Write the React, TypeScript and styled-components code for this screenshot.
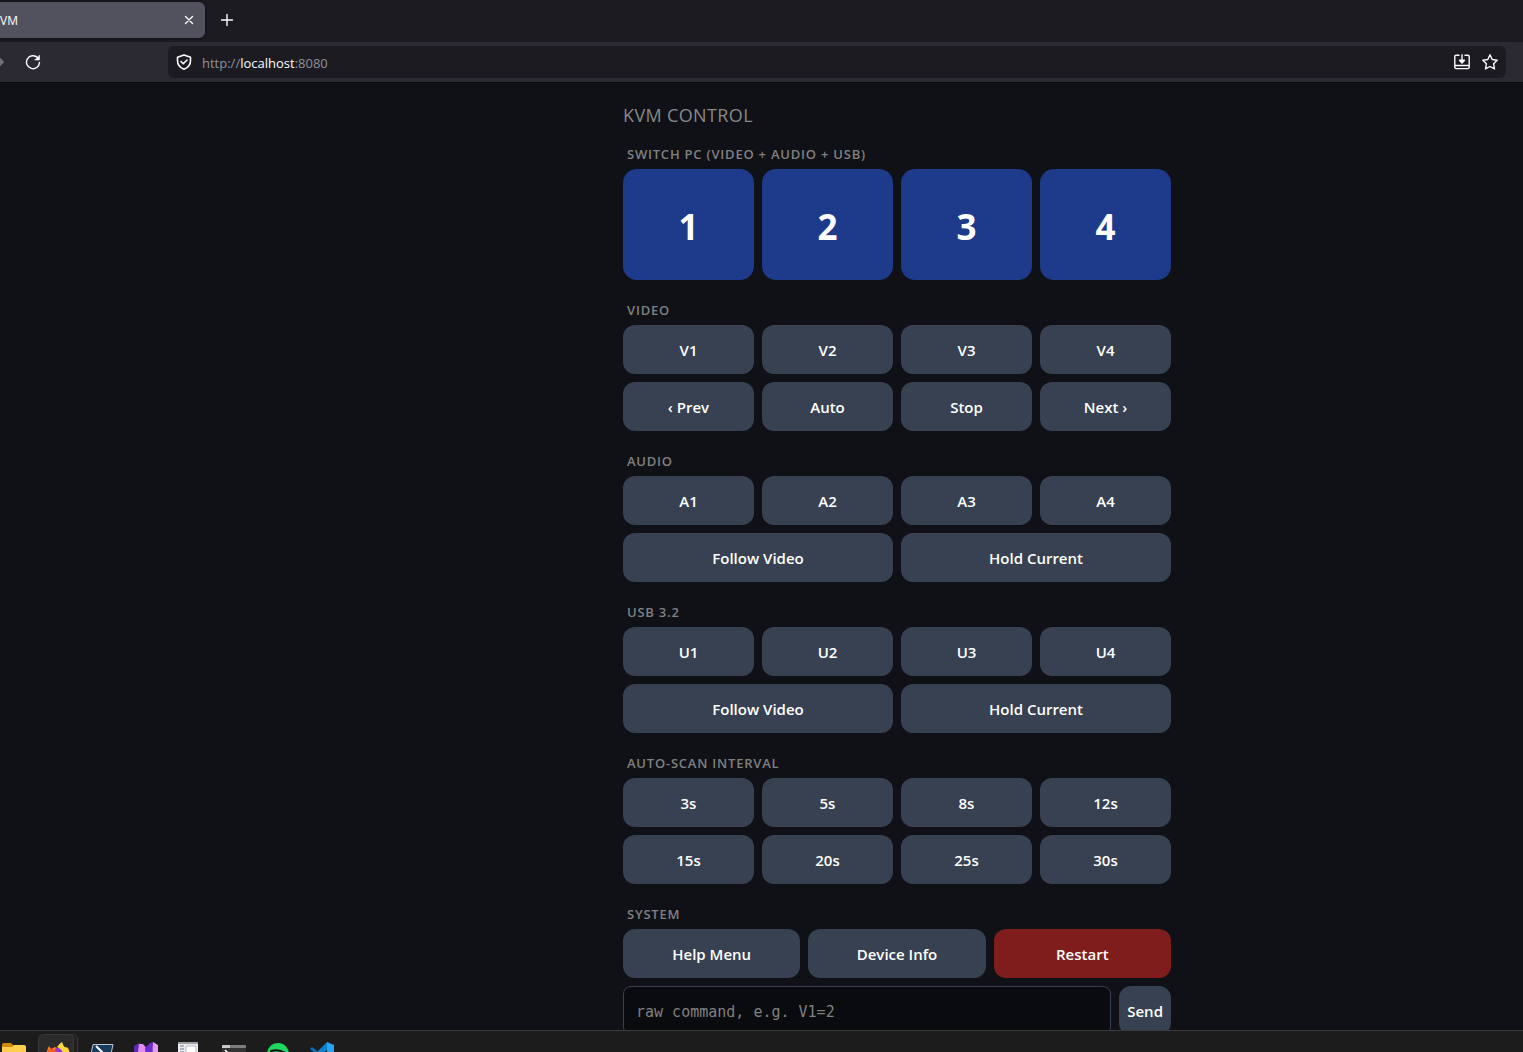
import React from "react";
import styled, { createGlobalStyle } from "styled-components";

const ui = '"Open Sans", "Noto Sans", sans-serif';

const GlobalStyle = createGlobalStyle`
  * { box-sizing: border-box; }
  body { margin: 0; background: #0f1116; font-family: ${ui}; color: #fff; overflow: hidden; }
  button, input { font: inherit; color: inherit; }
`;

const Desktop = styled.div`
  height: 100vh;
  display: flex;
  flex-direction: column;
  overflow: hidden;
`;

const TabStrip = styled.div`
  height: 42px;
  flex: none;
  display: flex;
  align-items: center;
  gap: 8px;
  padding-bottom: 2px;
  background: #1c1b22;
`;

const Tab = styled.div`
  width: 205px;
  height: 36px;
  display: flex;
  align-items: center;
  justify-content: space-between;
  padding-right: 4px;
  border-radius: 0 6px 6px 0;
  background: #52525e;
  box-shadow: 0 0 3px #0c0c10;
  font-size: 12px;
`;

const IconButton = styled.button<{ $size?: number }>`
  width: ${(p) => p.$size ?? 28}px;
  height: ${(p) => p.$size ?? 28}px;
  flex: none;
  display: grid;
  place-items: center;
  padding: 0;
  border: 0;
  background: none;
  color: #fbfbfe;
`;

const Toolbar = styled.div`
  height: 41px;
  flex: none;
  display: flex;
  align-items: center;
  padding-right: 17px;
  background: #2b2a33;
  border-bottom: 1px solid #0a0a0d;
`;

const NavButtons = styled.div`
  width: 176px;
  margin-left: -8px;
  flex: none;
  display: flex;
  align-items: center;
  gap: 15px;
`;

const AddressBar = styled.div`
  flex: 1;
  height: 32px;
  display: flex;
  align-items: center;
  padding: 0 2px;
  border-radius: 6px;
  background: #1c1b22;
`;

const Address = styled.div`
  flex: 1;
  padding: 2px 0 0 4px;
  font-size: 13px;
  line-height: 18px;
  color: #8f8f98;
  b { font-weight: 400; color: #fbfbfe; }
`;

const Viewport = styled.div`
  flex: 1;
  min-height: 0;
  overflow: hidden;
  padding: 20px 0 0 271px;
`;

const Panel = styled.main`
  max-width: 548px;
  margin: 0 auto;
`;

const Title = styled.h1`
  margin: 0 0 18px;
  font-size: 18px;
  line-height: 24px;
  font-weight: 400;
  letter-spacing: 0.02em;
  color: #888;
`;

const Section = styled.section`
  margin-bottom: 21px;
`;

const SectionTitle = styled.h2`
  margin: 0 0 6px;
  padding-left: 4px;
  font-size: 13px;
  line-height: 18px;
  font-weight: 600;
  letter-spacing: 0.06em;
  color: #808080;
`;

const Grid = styled.div<{ $cols: number }>`
  display: grid;
  grid-template-columns: repeat(${(p) => p.$cols}, 1fr);
  gap: 8px;
  & + & { margin-top: 8px; }
`;

const Key = styled.button<{ $tone?: "danger" }>`
  height: 49px;
  padding: 0 8px;
  border: 0;
  border-radius: 12px;
  background: ${(p) => (p.$tone === "danger" ? "#7f1d1d" : "#374151")};
  font-size: 15px;
  font-weight: 600;
  color: #fff;
`;

const BigKey = styled(Key)`
  height: 111px;
  padding-top: 4px;
  border-radius: 14px;
  background: #1e3a8a;
  font-size: 35px;
  font-weight: 700;
`;

const CommandRow = styled.form`
  display: flex;
  gap: 8px;
  margin-top: 8px;
`;

const CommandInput = styled.input`
  flex: 1;
  min-width: 0;
  height: 49px;
  padding: 2px 12px 0;
  border: 1px solid #374151;
  border-radius: 8px;
  background: #0a0b0f;
  font-family: "DejaVu Sans Mono", monospace;
  font-size: 15px;
  &::placeholder { color: #808080; opacity: 1; }
`;

const Taskbar = styled.nav`
  height: 22px;
  flex: none;
  display: flex;
  overflow: hidden;
  padding: 3px 0 0;
  border-top: 1px solid #3c3c3c;
  background: #1c1c1c;
`;

const TaskButton = styled.button<{ $active?: boolean }>`
  width: 40px;
  height: 40px;
  flex: none;
  margin-right: 4px;
  padding: 7px 0 0;
  display: flex;
  justify-content: center;
  border: 1px solid ${(p) => (p.$active ? "#363636" : "transparent")};
  border-radius: 5px;
  background: ${(p) => (p.$active ? "#2b2b2b" : "none")};
  box-shadow: ${(p) => (p.$active ? "inset -3px 0 0 #1f1f1f, inset -4px 0 0 #363636" : "none")};
  &:first-child { margin-left: -6px; }
`;

const rows = (prefix: string) => [1, 2, 3, 4].map((n) => prefix + n);

function Keys({ labels, cols }: { labels: string[]; cols: number }) {
  return (
    <Grid $cols={cols}>
      {labels.map((label) => (
        <Key key={label} type="button">{label}</Key>
      ))}
    </Grid>
  );
}

const line = { fill: "none", stroke: "currentColor", strokeWidth: 1.4, strokeLinecap: "round", strokeLinejoin: "round" } as const;

const apps = [
  {
    name: "File Explorer",
    icon: <><path d="M0 3q0-2 2-2h7l3 3v4H0z" fill="#d28b08" /><path d="M0 5h10l2-2h10q2 0 2 2v17H0z" fill="#ffcf4d" /></>,
  },
  {
    name: "Firefox",
    icon: <><path d="M0 12l2-6 1-2 2 3 4-2 5 2 5-2 3 1q2 3 2 6a12 11 0 0 1-24 0z" fill="#ff7a1a" /><path d="M10 6l5 0 2 4-5 5-5-3z" fill="#9333d8" /><path d="M11 5q3-4 5-5 1 4 4 6l1-1q3 5 2 9h-6q1-6-6-9z" fill="#ffd83b" /><path d="M2 8l5-1 4 3-3 4-6 1z" fill="#f1591f" /></>,
  },
  {
    name: "PowerShell",
    icon: <><path d="M3 2.500h20l-4 19H-1z" fill="#183a5c" stroke="#b9c9d6" /><path d="M6 4l6 6-8 7" fill="none" stroke="#fff" strokeWidth="2" /></>,
  },
  {
    name: "Visual Studio",
    icon: <><path d="M0 4l5-3 6 6-5 6-6-3z" fill="#5b2bb5" /><path d="M5 2l4 0 5 6-5 6-5-4z" fill="#e28bf2" /><path d="M11 6l5-5 4-1 1 6-9 12z" fill="#6a2bd0" /><path d="M19 0l5 3v17l-6 2z" fill="#e79af5" /></>,
  },
  {
    name: "Editor",
    icon: <><path d="M0 0h20v22H0z" fill="#eceef1" /><path d="M0 0h20v2H0z" fill="#9c9fa3" /><path d="M2 4h4M2 7h4M2 10h4M2 13h4" stroke="#6c7b88" /><path d="M8 4h10v18H8z" fill="#fff" stroke="#b5bbc4" /></>,
  },
  {
    name: "Terminal",
    icon: <><path d="M0 4q0-1 1-1h22q1 0 1 1v18H0z" fill="#333" /><path d="M0 6V4q0-1 1-1h22q1 0 1 1v2z" fill="#7b7b7b" /><path d="M0 6V4q0-1 1-1h7v3z" fill="#c9c9c9" /><path d="M3 8l3 3" stroke="#fff" strokeWidth="1.5" /></>,
  },
  {
    name: "Spotify",
    icon: <><circle cx="12" cy="12" r="11" fill="#1ed760" /><path d="M5 9q8-2 14 2" fill="none" stroke="#111" strokeWidth="2" strokeLinecap="round" /></>,
  },
  {
    name: "Visual Studio Code",
    icon: <><path d="M0 7l2-2 16 12v5z" fill="#0a6fb8" /><path d="M17 0L3 14l3 3L18 7z" fill="#0b82d0" /><path d="M17 0l7 3v17l-7 3z" fill="#27a4f2" /></>,
  },
];

export default function App() {
  return (
    <>
      <GlobalStyle />
      <Desktop>
        <TabStrip>
          <Tab>
            <span>VM</span>
            <IconButton type="button" aria-label="Close tab" $size={24}>
              <svg width="10" height="10" viewBox="0 0 10 10" {...line}><path d="M1.500 1.500l7 7M8.500 1.500l-7 7" /></svg>
            </IconButton>
          </Tab>
          <IconButton type="button" aria-label="New tab">
            <svg width="14" height="14" viewBox="0 0 14 14" {...line}><path d="M7 1.500v11M1.500 7h11" /></svg>
          </IconButton>
        </TabStrip>

        <Toolbar>
          <NavButtons>
            <IconButton type="button" aria-label="Forward" $size={12}>
              <svg width="12" height="12" viewBox="0 0 12 12" fill="none" stroke="#77767e" strokeWidth="1.8"><path d="M7 2l4 4-4 4M0 6h11" /></svg>
            </IconButton>
            <IconButton type="button" aria-label="Reload">
              <svg width="16" height="16" viewBox="0 0 16 16" {...line}>
                <path d="M14.500 8.500A6.500 6.500 0 1 1 12.600 3.600" />
                <path d="M14.500 1.500v4.500H10z" fill="currentColor" strokeWidth=".6" />
              </svg>
            </IconButton>
          </NavButtons>
          <AddressBar>
            <IconButton type="button" aria-label="Site information">
              <svg width="16" height="16" viewBox="0 0 16 16" {...line} strokeWidth={1.6}>
                <path d="M8 .9l6.500 2.300v3.600c0 4-2.500 7-6.500 8.400C4 13.800 1.500 10.800 1.500 6.800V3.200z" />
                <path d="M5 7.500l2.200 2.200L11 6" />
              </svg>
            </IconButton>
            <Address>http://<b>localhost</b>:8080</Address>
            <IconButton type="button" aria-label="Install app">
              <svg width="16" height="16" viewBox="0 0 16 16" {...line}>
                <path d="M5 1.200H2.200Q.8 1.200.8 2.600v10.600q0 1.400 1.400 1.400h11.600q1.400 0 1.400-1.400V2.600q0-1.400-1.400-1.400H11M.8 11.500h14.400M8 .8v7.400" />
                <path d="M5.500 6.200h5L8 9z" fill="currentColor" />
              </svg>
            </IconButton>
            <IconButton type="button" aria-label="Bookmark this page">
              <svg width="16" height="16" viewBox="0 0 16 16" {...line}><path d="M8 .8l2.200 4.700 5 .7-3.600 3.600.9 5.100L8 12.500l-4.500 2.400.9-5.100L.8 6.200l5-.7z" /></svg>
            </IconButton>
          </AddressBar>
        </Toolbar>

        <Viewport>
          <Panel>
            <Title>KVM CONTROL</Title>
            <Section>
              <SectionTitle>SWITCH PC (VIDEO + AUDIO + USB)</SectionTitle>
              <Grid $cols={4}>
                {rows("").map((n) => <BigKey key={n} type="button">{n}</BigKey>)}
              </Grid>
            </Section>
            <Section>
              <SectionTitle>VIDEO</SectionTitle>
              <Keys cols={4} labels={rows("V")} />
              <Keys cols={4} labels={["‹ Prev", "Auto", "Stop", "Next ›"]} />
            </Section>
            <Section>
              <SectionTitle>AUDIO</SectionTitle>
              <Keys cols={4} labels={rows("A")} />
              <Keys cols={2} labels={["Follow Video", "Hold Current"]} />
            </Section>
            <Section>
              <SectionTitle>USB 3.2</SectionTitle>
              <Keys cols={4} labels={rows("U")} />
              <Keys cols={2} labels={["Follow Video", "Hold Current"]} />
            </Section>
            <Section>
              <SectionTitle>AUTO-SCAN INTERVAL</SectionTitle>
              <Keys cols={4} labels={["3s", "5s", "8s", "12s", "15s", "20s", "25s", "30s"]} />
            </Section>
            <Section>
              <SectionTitle>SYSTEM</SectionTitle>
              <Grid $cols={3}>
                <Key type="button">Help Menu</Key>
                <Key type="button">Device Info</Key>
                <Key type="button" $tone="danger">Restart</Key>
              </Grid>
              <CommandRow onSubmit={(e) => e.preventDefault()}>
                <CommandInput aria-label="Raw command" placeholder="raw command, e.g. V1=2" />
                <Key type="submit">Send</Key>
              </CommandRow>
            </Section>
          </Panel>
        </Viewport>

        <Taskbar aria-label="Taskbar">
          {apps.map((app) => (
            <TaskButton key={app.name} type="button" aria-label={app.name} $active={app.name === "Firefox"}>
              <svg width="24" height="24" viewBox="0 0 24 24">{app.icon}</svg>
            </TaskButton>
          ))}
        </Taskbar>
      </Desktop>
    </>
  );
}
